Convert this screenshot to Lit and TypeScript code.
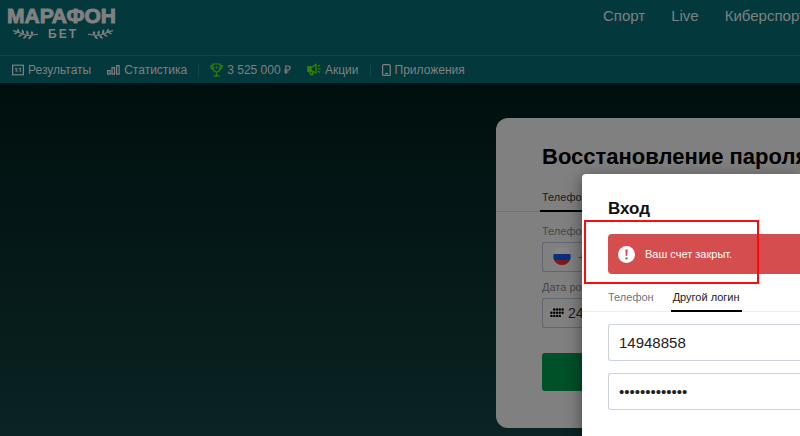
import { LitElement, html, css, svg } from "lit";
import { customElement, state } from "lit/decorators.js";

const laurel = svg`
  <path d="M1 2.500C7 3 11 7.500 18 7.500L27 6.200" fill="none" stroke="currentColor" stroke-width="1.100"/>
  <path d="M7.500 4.500Q8.500 1.500 5.500 .5Q4.500 3.500 7.500 4.500ZM12 6.300Q13.500 3 10.500 1Q9 4.500 12 6.300ZM16.500 7.300Q18.500 4.500 15.500 2Q13.500 5 16.500 7.300ZM21 7.200Q23.500 5 20.500 2.800Q18 5 21 7.200ZM6.500 4Q3.500 3.500 2 6Q5 6.800 6.500 4ZM11 6Q7.500 6 6.500 8.800Q10 9 11 6ZM15.500 7.200Q11.500 8 11.500 11Q15 10.600 15.500 7.200ZM20.500 7.300Q16.500 8.600 17 11.500Q20.500 10.800 20.500 7.300Z" fill="currentColor"/>`;

@customElement("site-header")
export class SiteHeader extends LitElement {
  static styles = css`
    :host {
      display: block;
      background: #03393c;
      color: #808080;
    }
    a {
      color: inherit;
      text-decoration: none;
    }
    .main {
      display: flex;
      justify-content: space-between;
      height: 55px;
      border-bottom: 1px solid #0e4446;
      overflow: hidden;
    }
    .logo {
      display: flex;
      flex-direction: column;
      padding: 4px 0 0 7px;
      font-size: 21px;
      font-weight: bold;
      line-height: 24px;
    }
    .name {
      -webkit-text-stroke: 1px currentColor;
    }
    .sub {
      display: flex;
      align-items: center;
      gap: 9px;
      padding-left: 5px;
      font-size: 12px;
      line-height: 12px;
      letter-spacing: 2px;
    }
    .primary {
      display: flex;
      gap: 26px;
      width: 197px;
      padding-top: 7px;
      font-size: 15px;
      line-height: 18px;
      white-space: nowrap;
    }
    .secondary {
      display: flex;
      align-items: center;
      height: 27px;
      padding-left: 12px;
      font-size: 12px;
      line-height: 16px;
      white-space: nowrap;
    }
    .secondary a {
      display: flex;
      align-items: center;
      gap: 4px;
      margin-right: 16px;
    }
    .secondary svg {
      flex: none;
    }
    .divider {
      width: 1px;
      height: 14px;
      margin: 0 11px 0 -5px;
      background: #124649;
    }
    .lime {
      color: #348200;
    }
  `;

  render() {
    return html`
      <div class="main">
        <a class="logo" href="#" aria-label="МАРАФОН БЕТ">
          <span class="name">МАРАФОН</span>
          <span class="sub">
            <svg width="27" height="12" viewBox="0 0 28 12">${laurel}</svg>
            <span>БЕТ</span>
            <svg width="27" height="12" viewBox="0 0 28 12"><g transform="matrix(-1 0 0 1 28 0)">${laurel}</g></svg>
          </span>
        </a>
        <nav class="primary">
          <a href="#">Спорт</a><a href="#">Live</a><a href="#">Киберспорт</a>
        </nav>
      </div>
      <nav class="secondary">
        <a href="#">
          <svg width="12" height="12" viewBox="0 0 12 12" fill="none" stroke="currentColor">
            <rect x=".6" y="1.200" width="10.800" height="9.600" stroke-width="1.200"/>
            <path d="M3 4.800L4.200 4V8M7 4.800L8.300 4V8M5.800 4.600v.8M5.800 6.600v.8"/>
          </svg>
          Результаты
        </a>
        <a href="#">
          <svg width="13" height="12" viewBox="0 0 13 12" fill="none" stroke="currentColor" stroke-width="1.200">
            <rect x=".6" y="6.600" width="2.500" height="3.500"/>
            <rect x="5" y="3.600" width="2.500" height="6.500"/>
            <rect x="9.600" y="1.600" width="2.500" height="8.500"/>
          </svg>
          Статистика
        </a>
        <span class="divider"></span>
        <a href="#">
          <svg class="lime" width="13" height="14" viewBox="0 0 13 14" fill="none" stroke="currentColor" stroke-width="1.200">
            <path d="M3 1H10V5Q10 8.500 6.500 9Q3 8.500 3 5ZM3 2.500H.8Q.8 6 3.500 6.500M10 2.500H12.200Q12.200 6 9.500 6.500M6.500 9V12.500M3.500 12.800H9.500"/>
            <circle cx="6.500" cy="4.500" r="1.100" fill="currentColor" stroke="none"/>
          </svg>
          3 525 000 ₽
        </a>
        <a href="#">
          <svg class="lime" width="14" height="13" viewBox="0 0 14 13" fill="none" stroke="currentColor" stroke-width="1.300">
            <path d="M1 4H5L9 1.500V10L5 8H1ZM2.500 8L3.500 11.500H6L5 8"/>
            <path d="M1 4H4V8H1Z" fill="currentColor"/>
            <path d="M10.800 3.500L12.800 2M10.800 5.800H13.500M10.800 8L12.800 9.500"/>
          </svg>
          Акции
        </a>
        <span class="divider"></span>
        <a href="#">
          <svg width="9" height="12" viewBox="0 0 9 12" fill="none" stroke="currentColor" stroke-width="1.200">
            <rect x=".6" y=".6" width="7.600" height="10.800" rx="1"/>
            <path d="M3 9.500H6"/>
          </svg>
          Приложения
        </a>
      </nav>
    `;
  }
}

@customElement("recovery-card")
export class RecoveryCard extends LitElement {
  static styles = css`
    :host {
      display: block;
      box-sizing: border-box;
      padding-bottom: 37px;
      border-radius: 12px 0 0 12px;
      background: #808080;
      color: #000;
      overflow: hidden;
      white-space: nowrap;
    }
    h1 {
      margin: 0;
      padding: 26px 0 0 46px;
      font-size: 22px;
      line-height: 26px;
    }
    .tabs {
      display: flex;
      padding: 16px 0 0 44px;
      border-bottom: 1px solid #737373;
    }
    .tab {
      height: 26px;
      padding: 0 2px 3px;
      border: 0;
      border-bottom: 2px solid #000;
      margin-bottom: -1px;
      background: none;
      color: #1a1a1a;
      font: 11px/16px "Liberation Sans", sans-serif;
    }
    form {
      display: flex;
      flex-direction: column;
      padding: 11px 0 0 46px;
    }
    label {
      color: #43464c;
      font-size: 11px;
      line-height: 16px;
    }
    .field {
      display: flex;
      align-items: center;
      box-sizing: border-box;
      height: 30px;
      margin: 3px 0 7px;
      border: 1px solid #62666f;
      border-right: 0;
      border-radius: 3px 0 0 3px;
    }
    .flag {
      margin: 0 7px 0 10px;
    }
    .dots {
      margin: 0 4px 0 7px;
    }
    input {
      flex: 1;
      min-width: 0;
      padding: 0;
      border: 0;
      background: none;
      color: #1a1a1a;
      font: 14px "Liberation Sans", sans-serif;
    }
    #phone {
      color: #43464c;
    }
    .submit {
      height: 38px;
      margin-top: 18px;
      border: 0;
      border-radius: 3px 0 0 3px;
      background: #005028;
    }
  `;

  render() {
    // Columns filled in each row of the calendar glyph.
    const dots = [
      [1, 2, 3, 4],
      [0, 1, 2, 3, 4],
      [0, 1, 2, 3],
    ];
    return html`
      <h1>Восстановление пароля</h1>
      <div class="tabs"><button class="tab" type="button">Телефон</button></div>
      <form>
        <label for="phone">Телефон</label>
        <div class="field">
          <svg class="flag" width="18" height="18" viewBox="0 0 18 18">
            <path d="M.5 6.500A8.500 8.500 0 0 1 17.500 6.500Z" fill="#858585"/>
            <path d="M.8 6A8.500 8.500 0 0 0 1.200 12.500H16.800A8.500 8.500 0 0 0 17.200 6Z" fill="#0a2e7a"/>
            <path d="M1.200 12A8.500 8.500 0 0 0 16.800 12Z" fill="#7c1a1a"/>
          </svg>
          <input id="phone" type="tel" value="+7" />
        </div>
        <label for="birth">Дата рождения</label>
        <div class="field">
          <svg class="dots" width="14" height="12" viewBox="0 0 14 12">
            ${dots.map((row, y) =>
              row.map((x) => svg`<circle cx=${1.4 + x * 2.8} cy=${2.5 + y * 3.2} r="1.200"/>`)
            )}
          </svg>
          <input id="birth" value="24" />
        </div>
        <button class="submit" type="button" aria-label="Восстановить"></button>
      </form>
    `;
  }
}

@customElement("login-dialog")
export class LoginDialog extends LitElement {
  static styles = css`
    :host {
      display: block;
      box-sizing: border-box;
      padding-top: 24px;
      border-radius: 4px 0 0 0;
      background: #fff;
      color: #111;
      box-shadow: 0 4px 16px rgba(0, 0, 0, 0.5);
    }
    h2 {
      margin: 0 0 14px 26px;
      font-size: 17px;
      line-height: 22px;
    }
    .alert {
      position: relative;
      display: flex;
      align-items: center;
      gap: 10px;
      height: 40px;
      margin-left: 26px;
      padding-left: 10px;
      border-radius: 4px 0 0 4px;
      background: #d44d4f;
      color: #fff;
      font-size: 11px;
    }
    .marker {
      position: absolute;
      top: -14px;
      left: -24px;
      box-sizing: border-box;
      width: 175px;
      height: 64px;
      border: 2px solid #ff0a0a;
    }
    .tabs {
      display: flex;
      gap: 15px;
      padding: 14px 0 0 24px;
      border-bottom: 1px solid #ececec;
    }
    .tab {
      height: 24px;
      padding: 0 2px 5px;
      border: 0;
      border-bottom: 2px solid transparent;
      margin-bottom: -1px;
      background: none;
      color: #6f747c;
      font: 11px/16px "Liberation Sans", sans-serif;
      cursor: pointer;
    }
    .tab[aria-selected="true"] {
      border-color: #000;
      color: #222;
    }
    form {
      display: flex;
      flex-direction: column;
      gap: 12px;
      padding: 12px 0 0 26px;
    }
    input {
      box-sizing: border-box;
      width: 100%;
      height: 37px;
      padding: 0 10px;
      border: 1px solid #cdd3dd;
      border-right: 0;
      border-radius: 3px 0 0 3px;
      background: #fff;
      color: #222;
      font: 15px "Liberation Sans", sans-serif;
    }
  `;

  @state() private tab = 1;

  render() {
    return html`
      <h2>Вход</h2>
      <div class="alert" role="alert">
        <svg width="17" height="17" viewBox="0 0 17 17">
          <circle cx="8.500" cy="8.500" r="8.500" fill="#fff"/>
          <path d="M7.300 3.500H9.700L9.200 10H7.800Z" fill="#d44d4f"/>
          <circle cx="8.500" cy="12.400" r="1.200" fill="#d44d4f"/>
        </svg>
        <span>Ваш счет закрыт.</span>
        <div class="marker"></div>
      </div>
      <div class="tabs" role="tablist">
        ${["Телефон", "Другой логин"].map(
          (name, i) => html`<button class="tab" role="tab" aria-selected=${i === this.tab} @click=${() => (this.tab = i)}>${name}</button>`
        )}
      </div>
      <form>
        <input aria-label="Логин" value="14948858" autocomplete="username" />
        <input aria-label="Пароль" type="password" value="parol12345678" autocomplete="current-password" />
      </form>
    `;
  }
}

@customElement("app-root")
export class AppRoot extends LitElement {
  static styles = css`
    :host {
      position: relative;
      display: flex;
      flex-direction: column;
      min-height: 100vh;
      overflow: hidden;
      font-family: "Liberation Sans", Arial, sans-serif;
    }
    main {
      flex: 1;
      padding: 35px 0 8px 62%;
      background: linear-gradient(#000f0e, #0a2323);
    }
    .login {
      position: absolute;
      top: 174px;
      right: 0;
      bottom: 0;
      width: 218px;
    }
  `;

  render() {
    return html`
      <site-header></site-header>
      <main><recovery-card></recovery-card></main>
      <login-dialog class="login" role="dialog" aria-label="Вход"></login-dialog>
    `;
  }
}
